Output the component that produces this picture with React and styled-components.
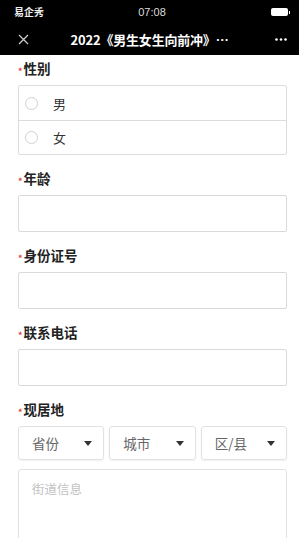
import React from "react";
import styled, { createGlobalStyle } from "styled-components";

const Global = createGlobalStyle`
  html, body { margin: 0; padding: 0; background: #fff; }
  body { font-family: "Noto Sans CJK SC", "Noto Sans", sans-serif; }
  * { box-sizing: border-box; }
`;

const Page = styled.div`
  width: 299px;
  min-height: 538px;
  background: #fff;
  overflow: hidden;
`;

const Header = styled.header`
  background: #000;
  color: #fff;
  height: 55px;
  display: flex;
  flex-direction: column;
`;

const StatusBar = styled.div`
  height: 24px;
  display: grid;
  grid-template-columns: 1fr auto 1fr;
  align-items: center;
  padding: 0 9px 0 14px;
  font-size: 10px;
  line-height: 12px;
`;

const Carrier = styled.span`
  font-weight: 700;
  color: #eee;
`;

const Time = styled.span`
  font-family: "Liberation Sans", Arial, sans-serif;
  font-size: 11px;
  color: #ddd;
`;

const Battery = styled.span`
  justify-self: end;
  display: flex;
  align-items: center;
  gap: 1px;
`;

const BatteryBody = styled.span`
  width: 17px;
  height: 8px;
  border-radius: 2px;
  background: #fff;
`;

const BatteryNub = styled.span`
  width: 1.5px;
  height: 3px;
  background: #fff;
`;

const NavBar = styled.div`
  height: 31px;
  display: grid;
  grid-template-columns: 40px 1fr 40px;
  align-items: center;
`;

const NavIcon = styled.span`
  display: flex;
  align-items: center;
  justify-content: ${(p) => (p.$end ? "flex-end" : "flex-start")};
  padding: ${(p) => (p.$end ? "0 12px 0 0" : "0 0 0 18px")};
`;

const Title = styled.div`
  text-align: center;
  font-size: 13px;
  font-weight: 700;
  white-space: nowrap;
  color: #fff;
  letter-spacing: -0.2px;
`;

const Form = styled.div`
  padding: 3px 12px 0 18px;
  display: flex;
  flex-direction: column;
  gap: 13px;
`;

const Field = styled.div`
  display: flex;
  flex-direction: column;
  gap: 7px;
`;

const Label = styled.div`
  height: 20px;
  line-height: 20px;
  font-size: 13.5px;
  font-weight: 700;
  color: #222;
  display: flex;
  align-items: center;
`;

const Star = styled.span`
  color: #e0443a;
  font-size: 9px;
  line-height: 9px;
  height: 9px;
  margin-right: 1px;
  margin-top: 7px;
`;

const RadioGroup = styled.div`
  border: 1px solid #dcdcdc;
  border-radius: 2px;
`;

const RadioRow = styled.div`
  height: 34px;
  display: flex;
  align-items: center;
  padding-left: 6px;
  gap: 15px;
  font-size: 13px;
  color: #333;
  & + & { border-top: 1px solid #dcdcdc; }
`;

const RadioCircle = styled.span`
  width: 13px;
  height: 13px;
  border-radius: 50%;
  border: 1px solid #d0d0d0;
  background: #fff;
`;

const Input = styled.div`
  height: 37px;
  border: 1px solid #dadada;
  border-radius: 2px;
  background: #fff;
`;

const SelectRow = styled.div`
  display: grid;
  grid-template-columns: repeat(3, 1fr);
  gap: 5px;
`;

const Select = styled.div`
  height: 34px;
  border: 1px solid #e2e2e2;
  border-radius: 3px;
  box-shadow: 0 1px 2px rgba(0, 0, 0, 0.06);
  display: flex;
  align-items: center;
  justify-content: space-between;
  padding: 0 11px 0 13px;
  font-size: 13.5px;
  color: #666;
`;

const Caret = styled.span`
  width: 0;
  height: 0;
  border-left: 4.5px solid transparent;
  border-right: 4.5px solid transparent;
  border-top: 5px solid #333;
`;

const TextArea = styled.div`
  margin-top: 2px;
  height: 90px;
  border: 1px solid #e2e2e2;
  border-radius: 3px;
  padding: 9px 13px;
  font-size: 12.5px;
  color: #c2c2c2;
`;

export default function App() {
  return (
    <Page>
      <Global />
      <Header>
        <StatusBar>
          <Carrier>易企秀</Carrier>
          <Time>07:08</Time>
          <Battery>
            <BatteryBody />
            <BatteryNub />
          </Battery>
        </StatusBar>
        <NavBar>
          <NavIcon>
            <svg width="11" height="11" viewBox="0 0 11 11">
              <path d="M1 1L10 10M10 1L1 10" stroke="#ccc" strokeWidth="1.3" />
            </svg>
          </NavIcon>
          <Title>2022《男生女生向前冲》…</Title>
          <NavIcon $end>
            <svg width="12" height="3" viewBox="0 0 12 3">
              <circle cx="1.5" cy="1.5" r="1.3" fill="#fff" />
              <circle cx="6" cy="1.5" r="1.3" fill="#fff" />
              <circle cx="10.5" cy="1.5" r="1.3" fill="#fff" />
            </svg>
          </NavIcon>
        </NavBar>
      </Header>
      <Form>
        <Field>
          <Label><Star>*</Star>性别</Label>
          <RadioGroup>
            <RadioRow><RadioCircle />男</RadioRow>
            <RadioRow><RadioCircle />女</RadioRow>
          </RadioGroup>
        </Field>
        <Field>
          <Label><Star>*</Star>年龄</Label>
          <Input />
        </Field>
        <Field>
          <Label><Star>*</Star>身份证号</Label>
          <Input />
        </Field>
        <Field>
          <Label><Star>*</Star>联系电话</Label>
          <Input />
        </Field>
        <Field>
          <Label><Star>*</Star>现居地</Label>
          <SelectRow>
            <Select>省份<Caret /></Select>
            <Select>城市<Caret /></Select>
            <Select>区/县<Caret /></Select>
          </SelectRow>
          <TextArea>街道信息</TextArea>
        </Field>
      </Form>
    </Page>
  );
}
